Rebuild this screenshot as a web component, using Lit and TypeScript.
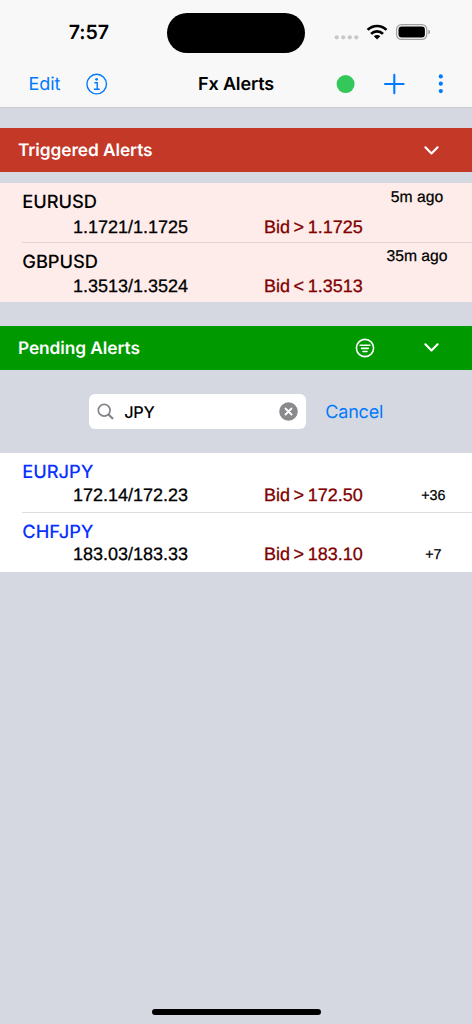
import { LitElement, html, css, svg, nothing } from "lit";
import { customElement, property } from "lit/decorators.js";

interface Alert {
  pair: string;
  price: string;
  rule: string;
  note: string;
}

const triggered: Alert[] = [
  { pair: "EURUSD", price: "1.1721/1.1725", rule: "Bid > 1.1725", note: "5m ago" },
  { pair: "GBPUSD", price: "1.3513/1.3524", rule: "Bid < 1.3513", note: "35m ago" },
];

const pending: Alert[] = [
  { pair: "EURJPY", price: "172.14/172.23", rule: "Bid > 172.50", note: "+36" },
  { pair: "CHFJPY", price: "183.03/183.33", rule: "Bid > 183.10", note: "+7" },
];

const chevron = svg`<path d="M1.2 1.3 L7.3 7.5 L13.4 1.3" fill="none" stroke="#fff" stroke-width="2.1" stroke-linecap="round" stroke-linejoin="round"/>`;

@customElement("status-bar")
export class StatusBar extends LitElement {
  static styles = css`
    :host { display: flex; height: 60px; align-items: flex-start; }
    .time { width: 167px; box-sizing: border-box; padding: 20px 0 0 68.8px; font-size: 19.6px; line-height: 25px; font-weight: 600; letter-spacing: -0.1px; }
    .island { width: 137.5px; height: 40.5px; margin-top: 12.5px; border-radius: 21px; background: #000; }
    .signals { margin: 22px 0 0 28.5px; }
    svg { display: block; }
  `;
  render() {
    return html`
      <div class="time">7:57</div>
      <div class="island"></div>
      <svg class="signals" width="100" height="20" viewBox="333.5 22 100 20">
        <g fill="#c8c8ca">
          <circle cx="337.2" cy="37.3" r="2.1"/><circle cx="343.7" cy="37.3" r="2.1"/>
          <circle cx="350.3" cy="37.3" r="2.1"/><circle cx="356.8" cy="37.3" r="2.1"/>
        </g>
        <g fill="none" stroke="#000" stroke-width="2.7">
          <path d="M368.1 29.9 A13.4 13.4 0 0 1 387 29.9"/>
          <path d="M371.6 33.9 A8.4 8.4 0 0 1 383.5 33.9"/>
        </g>
        <path d="M377.55 39.5 L374.3 36.2 A4.7 4.7 0 0 1 380.8 36.2 Z"/>
        <rect x="397.1" y="24.6" width="30.2" height="14.8" rx="4.8" fill="none" stroke="#a0a0a1" stroke-width="1.2"/>
        <rect x="399" y="26.5" width="26.4" height="11" rx="3.2"/>
        <path d="M428.8 29.6 Q430.7 30.3 430.7 32 Q430.7 33.7 428.8 34.4 Z" fill="#a0a0a1"/>
      </svg>
    `;
  }
}

@customElement("nav-bar")
export class NavBar extends LitElement {
  static styles = css`
    :host { display: grid; grid-template-columns: 84.5px 113.5px 130px 1fr; height: 47px; align-items: center; color: #007aff; font-size: 18px; line-height: 24px; }
    .edit { padding: 2px 0 0 28.5px; letter-spacing: -0.1px; }
    .title { padding-top: 2px; color: #000; font-weight: 600; font-size: 18px; letter-spacing: -0.15px; }
    svg { display: block; }
  `;
  render() {
    return html`
      <div class="edit">Edit</div>
      <svg width="24" height="24" viewBox="84.5 71.7 24 24">
        <circle cx="96.2" cy="83.8" r="9.8" fill="none" stroke="#007aff" stroke-width="1.4"/>
        <circle cx="96.1" cy="79" r="1.35" fill="#007aff"/>
        <path d="M93.9 82.4 H96.7 V88.7 M93.4 89 H99.2" fill="none" stroke="#007aff" stroke-width="1.4"/>
      </svg>
      <div class="title">Fx Alerts</div>
      <svg width="130" height="24" viewBox="328 71.7 130 24">
        <circle cx="345.6" cy="83.8" r="9" fill="#34c759"/>
        <path d="M394.3 74.4 V93 M385 83.7 H403.6" stroke="#007aff" stroke-width="2.1" stroke-linecap="round"/>
        <g fill="#007aff"><circle cx="440.8" cy="76.1" r="2.1"/><circle cx="440.8" cy="83.4" r="2.1"/><circle cx="440.8" cy="90.8" r="2.1"/></g>
      </svg>
    `;
  }
}

@customElement("section-header")
export class SectionHeader extends LitElement {
  @property() label = "";
  @property({ type: Boolean }) filter = false;
  static styles = css`
    :host { display: flex; align-items: center; height: 43.8px; color: #fff; font-size: 17.3px; line-height: 24px; font-weight: 600; box-sizing: border-box; padding: 0 33px 0 18px; }
    .label { flex: 1; padding-top: 2px; letter-spacing: -0.07px; }
    .filter { margin-right: 49.3px; }
    svg { display: block; }
  `;
  render() {
    return html`
      <div class="label">${this.label}</div>
      ${this.filter
        ? html`<svg class="filter" width="20" height="20" viewBox="0 0 20 20">
            <g fill="none" stroke="#fff" stroke-width="1.6" stroke-linecap="round">
              <circle cx="10" cy="10" r="8.6"/>
              <path d="M5.1 7.2 H14.9 M6.6 10.4 H13.4 M8 13.5 H12"/>
            </g>
          </svg>`
        : nothing}
      <svg width="15" height="9" viewBox="0 0 14.6 9">${chevron}</svg>
    `;
  }
}

@customElement("alert-list")
export class AlertList extends LitElement {
  @property({ attribute: false }) alerts: Alert[] = [];
  @property() kind = "";
  static styles = css`
    :host { display: block; }
    .list { background: #fff; --ink: #0a32ff; }
    .list.triggered { background: #feecea; --ink: #000; }
    .row { display: grid; grid-template-columns: 73px 191px 106px 102px; grid-template-rows: 23.5px 24px; height: 59.3px; padding-top: 6.6px; box-sizing: border-box; font-family: "Liberation Sans", Arial, sans-serif; white-space: nowrap; background: linear-gradient(#dedee1, #dedee1) 22px 0 / 100% 1px no-repeat; }
    .row:first-child { background: none; }
    .triggered .row { background-image: linear-gradient(#e4d3d5, #e4d3d5); grid-template-rows: 23.5px 28px; }
    .triggered .row:first-child { background: none; }
    .pair { grid-column: 1 / 4; padding: 0.8px 0 0 22.3px; font: 500 18.3px/24px Inter, sans-serif; color: var(--ink); letter-spacing: -0.05px; }
    .price, .rule { grid-row: 2; font-size: 18px; line-height: 24px; align-self: center; -webkit-text-stroke: 0.3px currentColor; }
    .price { grid-column: 2; }
    .rule { grid-column: 3; color: #800000; word-spacing: -1.4px; }
    .note { grid-column: 4; grid-row: 2; text-align: center; font-size: 14.3px; line-height: 26px; padding-left: 24.6px; -webkit-text-stroke: 0.25px currentColor; }
    .triggered .note { grid-row: 1; font-size: 15.7px; line-height: 20px; margin-top: -1.8px; padding: 0 8px 0 0; }
  `;
  render() {
    return html`<div class="list ${this.kind}">
      ${this.alerts.map(
        (a) => html`<div class="row">
          <div class="pair">${a.pair}</div>
          <div class="price">${a.price}</div>
          <div class="rule">${a.rule}</div>
          <div class="note">${a.note}</div>
        </div>`
      )}
    </div>`;
  }
}

@customElement("search-row")
export class SearchRow extends LitElement {
  static styles = css`
    :host { display: flex; height: 83.5px; box-sizing: border-box; padding: 24.2px 0 0 89px; }
    .field { display: flex; align-items: center; width: 217.3px; height: 35.4px; box-sizing: border-box; border-radius: 6px; background: #fff; padding: 0 8px; }
    .query { flex: 1; padding: 1.4px 0 0 10.3px; font-size: 16.3px; font-weight: 550; line-height: 22px; letter-spacing: -0.3px; }
    .cancel { padding: 1.4px 0 0 19px; font-size: 18px; line-height: 35.4px; color: #007aff; letter-spacing: -0.2px; }
    svg { display: block; }
  `;
  render() {
    return html`
      <div class="field">
        <svg width="17" height="17" viewBox="0 0 17 17">
          <g fill="none" stroke="#85858a" stroke-linecap="round"><circle cx="7.2" cy="7.2" r="5.9" stroke-width="1.7"/><path d="M11.7 11.7 L15.4 15.3" stroke-width="2.3"/></g>
        </svg>
        <div class="query">JPY</div>
        <svg width="19" height="19" viewBox="0 0 19 19">
          <circle cx="9.5" cy="9.5" r="9.3" fill="#8a8a8e"/>
          <path d="M6.5 6.5 L12.5 12.5 M12.5 6.5 L6.5 12.5" stroke="#fff" stroke-width="1.8" stroke-linecap="round"/>
        </svg>
      </div>
      <div class="cancel">Cancel</div>
    `;
  }
}

@customElement("app-root")
export class AppRoot extends LitElement {
  static styles = css`
    :host { display: flex; flex-direction: column; width: 472px; height: 1024px; overflow: hidden; background: #d5d8e0; color: #000; font-family: Inter, sans-serif; text-rendering: geometricPrecision; }
    .top { background: #f8f8f8; border-bottom: 1px solid #c9cbd0; }
    .red { background: #c43828; margin: 20.4px 0 10.8px; }
    .green { background: #009a00; margin-top: 24.2px; }
    .home { width: 169px; height: 5.6px; border-radius: 3px; background: #000; margin: auto auto 9.4px; }
  `;
  render() {
    return html`
      <div class="top"><status-bar></status-bar><nav-bar></nav-bar></div>
      <section-header class="red" label="Triggered Alerts"></section-header>
      <alert-list kind="triggered" .alerts=${triggered}></alert-list>
      <section-header class="green" label="Pending Alerts" filter></section-header>
      <search-row></search-row>
      <alert-list .alerts=${pending}></alert-list>
      <div class="home"></div>
    `;
  }
}
